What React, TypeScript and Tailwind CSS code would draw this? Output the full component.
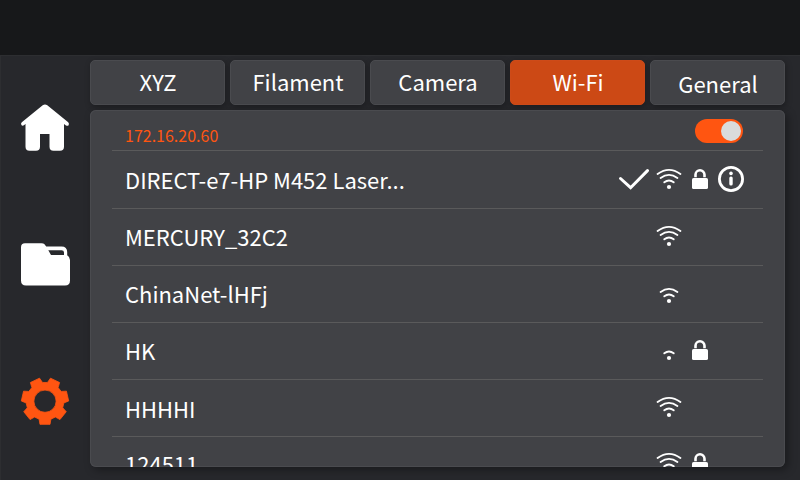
import React from "react";

const ACCENT = "#ff5511";

type Network = {
  name: string;
  strength: 1 | 2 | 3;
  locked?: boolean;
  connected?: boolean;
  row: string;
  label: string;
  icons: string;
};

const networks: Network[] = [
  { name: "DIRECT-e7-HP M452 Laser...", strength: 3, locked: true, connected: true, row: "h-[58px]", label: "pt-3", icons: "pt-[14px]" },
  { name: "MERCURY_32C2", strength: 3, row: "h-[57px]", label: "pt-[11px]", icons: "pt-[13px]" },
  { name: "ChinaNet-lHFj", strength: 2, row: "h-[57px]", label: "pt-[11px]", icons: "pt-[13px]" },
  { name: "HK", strength: 1, locked: true, row: "h-[57px]", label: "pt-[11px]", icons: "pt-[13px]" },
  { name: "HHHHI", strength: 3, row: "h-[57px]", label: "pt-3", icons: "pt-[13px]" },
  { name: "124511", strength: 3, locked: true, row: "h-[57px]", label: "pt-[10px]", icons: "pt-[12px]" },
];

const tabs = ["XYZ", "Filament", "Camera", "Wi-Fi", "General"];

const gearPoints = Array.from({ length: 7 })
  .flatMap((_, i) => {
    const centre = 90 + (i * 360) / 7;
    return [
      [-18.2, 18.9],
      [-12.3, 23.7],
      [12.3, 23.7],
      [18.2, 18.9],
    ].map(([offset, r]) => {
      const a = ((centre + offset) * Math.PI) / 180;
      return `${(25 + r * Math.cos(a)).toFixed(2)} ${(25.2 + r * Math.sin(a)).toFixed(2)}`;
    });
  })
  .join("L");

function HomeIcon() {
  return (
    <svg width="50" height="50" viewBox="0 0 50 50" fill="#fff">
      <path d="M22.7 4.2Q25 2.8 27.3 4.2L48.2 21.3Q49.5 22.6 48.6 24.2Q47.6 25.4 46 24.4L44 23V45.7Q44 49.7 40 49.7H33.5Q29.5 49.7 29.5 45.7V33H20V45.7Q20 49.7 16 49.7H9.5Q5.5 49.7 5.5 45.7V23L3.9 24.3Q2.4 25.3 1.4 24.1Q.5 22.6 1.8 21.3Z" />
    </svg>
  );
}

function FolderIcon() {
  return (
    <svg width="50" height="44" viewBox="0 0 50 44" fill="#fff">
      <path
        fillRule="evenodd"
        d="M5 1.2H21.5Q23.5 1.2 24.5 2.3L26.2 4.4H41.5Q47.2 4.400 47.2 10V13.3Q50 15 50 18V38.5Q50 43.5 45 43.5H6Q1 43.5 1 38.5V5.2Q1 1.2 5 1.2ZM28.3 8.3L31 13H44V10.5Q44 8.3 41.5 8.3Z"
      />
    </svg>
  );
}

function GearIcon() {
  return (
    <svg width="50" height="50" viewBox="0 0 50 50">
      <path
        fillRule="evenodd"
        fill={ACCENT}
        stroke={ACCENT}
        strokeWidth="0.8"
        strokeLinejoin="round"
        d={`M${gearPoints}ZM25 14.1a11.1 11.1 0 1 0 0 22.2a11.1 11.1 0 1 0 0 -22.2Z`}
      />
    </svg>
  );
}

function CheckIcon() {
  return (
    <svg width="32" height="28" viewBox="0 0 32 28" fill="none" stroke="#fff" strokeWidth="3" strokeLinecap="round">
      <path d="M2.5 13.5L12.6 22.7L29.5 5.6" />
    </svg>
  );
}

function WifiIcon({ strength }: { strength: number }) {
  return (
    <svg width="26" height="28" viewBox="0 0 26 28" fill="none" stroke="#fff" strokeWidth="1.9" strokeLinecap="round">
      <circle cx="13" cy="22" r="2.1" fill="#fff" stroke="none" />
      <path d="M8.3 17.3Q13 13.7 17.7 17.3" />
      {strength > 1 && <path d="M4.6 12.9Q13 6.8 21.4 12.9" />}
      {strength > 2 && <path d="M1.6 8.9Q13 .8 24.4 8.9" />}
    </svg>
  );
}

function LockIcon() {
  return (
    <svg width="16" height="28" viewBox="0 0 16 28">
      <path d="M3.5 12.3V9.8a4.5 4.5 0 0 1 9 0V12.3" fill="none" stroke="#fff" strokeWidth="2.6" />
      <rect x="0" y="13" width="16" height="11" rx="1.6" fill="#fff" />
    </svg>
  );
}

function InfoIcon() {
  return (
    <svg width="28" height="28" viewBox="0 0 28 28">
      <circle cx="14" cy="14" r="11.6" fill="none" stroke="#fff" strokeWidth="2.8" />
      <circle cx="14" cy="8.4" r="1.8" fill="#fff" />
      <rect x="12.3" y="11.4" width="3.4" height="9" rx="1.5" fill="#fff" />
    </svg>
  );
}

function NetworkRow({ network }: { network: Network }) {
  return (
    <li className={`flex shrink-0 border-b border-[#5a5a5b] pl-[13px] pr-[18px] ${network.row}`}>
      <span className={`flex-1 whitespace-pre text-[22px] leading-8 ${network.label}`}>{network.name}</span>
      <div className={`grid grid-cols-[38px_36px_25px_28px] ${network.icons}`}>
        <div>{network.connected && <CheckIcon />}</div>
        <WifiIcon strength={network.strength} />
        <div>{network.locked && <LockIcon />}</div>
        <div>{network.connected && <InfoIcon />}</div>
      </div>
    </li>
  );
}

export default function App() {
  return (
    <div className="flex h-[480px] w-[800px] flex-col overflow-hidden bg-[#27282c] font-['Noto_Sans_CJK_SC',sans-serif] text-white">
      <header className="h-[55px] shrink-0 bg-[#17181a]" />
      <div className="flex h-[425px] border-t border-l border-[#2d2e31]">
        <nav className="flex w-[89px] shrink-0 flex-col items-start pl-[19px] pt-[45px]">
          <button className="block h-[50px]"><HomeIcon /></button>
          <button className="mt-[91px] block h-[44px]"><FolderIcon /></button>
          <button className="mt-[90px] block h-[50px]"><GearIcon /></button>
        </nav>
        <main className="flex w-[695px] flex-col gap-[5px] pt-1">
          <div className="grid h-[45px] shrink-0 grid-cols-5 gap-[5px]">
            {tabs.map((tab) => (
              <button
                key={tab}
                className={`rounded-[5px] border pl-px text-[22px] leading-8 shadow-[1px_2px_6px_rgba(0,0,0,0.3)] ${
                  tab === "Wi-Fi" ? "border-[#cd4b19] bg-[#cc4915]" : "border-[#4a4b4f] bg-[#414246]"
                } ${tab === "General" ? "" : "pb-1"}`}
              >
                {tab}
              </button>
            ))}
          </div>
          <section className="h-[357px] shrink-0 overflow-hidden rounded-[6px] bg-[#414246] px-[22px] shadow-[inset_0_0_0_1px_#4a4b4f,3px_3px_8px_rgba(0,0,0,0.35)]">
            <div className="flex h-[41px] border-b border-[#5a5a5b] pl-[13px] pr-5">
              <span className="flex-1 pt-[14px] text-[16px] leading-[22px] text-[#ff5511]">172.16.20.60</span>
              <div className="mt-[9px] flex h-6 w-12 items-center justify-end rounded-full bg-[#ff5511] pr-[2px]">
                <div className="size-5 rounded-full bg-[#dadbdb]" />
              </div>
            </div>
            <ul className="flex flex-col">
              {networks.map((network) => (
                <NetworkRow key={network.name} network={network} />
              ))}
            </ul>
          </section>
        </main>
      </div>
    </div>
  );
}
